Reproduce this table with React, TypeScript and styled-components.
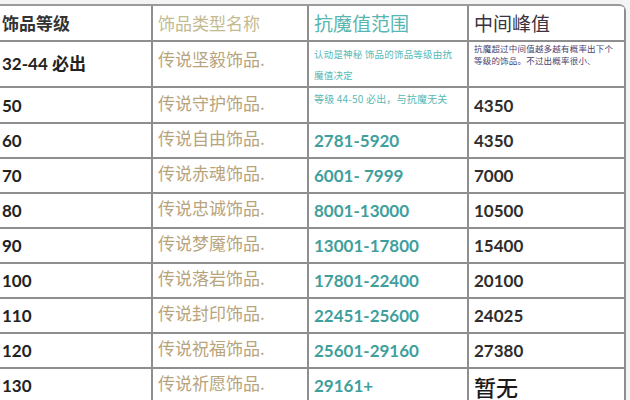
import { Fragment } from "react";
import styled, { createGlobalStyle } from "styled-components";

const GlobalStyle = createGlobalStyle`
  html, body {
    margin: 0;
    padding: 0;
    background: #f4f4f4;
  }
  body {
    width: 630px;
    height: 400px;
    overflow: hidden;
    font-family: "Noto Sans CJK SC", "Noto Sans", sans-serif;
  }
`;

type Tone = "level" | "name" | "range" | "peak";

const CJK = `"Noto Sans CJK SC", sans-serif`;
const NUM = `Lato, "Noto Sans CJK SC", sans-serif`;

const Page = styled.div`
  padding-top: 4px;
  height: 400px;
  box-sizing: border-box;
  overflow: hidden;
`;

const Table = styled.div`
  display: grid;
  grid-template-columns: 159px 156px 160px 157px;
  grid-template-rows: 36px 46px 36px repeat(8, 35px);
  margin-left: -8px;
  width: max-content;
  background: #fff;
  border-top: 2px solid #9a9a9a;
  border-left: 2px solid #9a9a9a;
  border-top-right-radius: 7px;
  overflow: hidden;
`;

const colours: Record<Tone, string> = {
  level: "#222",
  name: "#b8a47c",
  range: "#3f9f9c",
  peak: "#2e2e2e",
};

const Cell = styled.div<{ $tone: Tone; $top?: boolean }>`
  box-sizing: border-box;
  border-right: 2px solid #8e8e8e;
  border-bottom: 2px solid #8e8e8e;
  display: flex;
  flex-direction: column;
  justify-content: ${(p) => (p.$top ? "flex-start" : "center")};
  padding: ${(p) =>
    p.$tone === "level" ? "0 0 0 8px" : p.$tone === "name" ? "0 0 6px 5px" : "0 0 0 5px"};
  color: ${(p) => colours[p.$tone]};
  font-family: ${(p) => (p.$tone === "name" ? CJK : NUM)};
  font-size: 17px;
  font-weight: ${(p) => (p.$tone === "name" ? 400 : 700)};
  white-space: nowrap;
`;

const HeadCell = styled(Cell)`
  font-family: ${CJK};
  font-weight: ${(p) => (p.$tone === "level" ? 700 : 400)};
  font-size: ${(p) => (p.$tone === "level" ? "17px" : p.$tone === "name" ? "17px" : "19px")};
  color: ${(p) =>
    p.$tone === "level"
      ? "#333"
      : p.$tone === "name"
      ? "#c4ba90"
      : p.$tone === "range"
      ? "#57b6b2"
      : "#3a3440"};
  padding-bottom: 2px;
`;

const LevelText = styled.span`
  margin-top: 8px;
`;

const Note = styled.div<{ $lh: number; $size: number; $color: string }>`
  font-family: ${CJK};
  font-weight: 400;
  font-size: ${(p) => p.$size}px;
  line-height: ${(p) => p.$lh}px;
  color: ${(p) => p.$color};
  letter-spacing: 0.2px;
`;

const NameTop = styled.span`
  margin-top: 4px;
`;

const None = styled.span`
  font-family: ${CJK};
  font-weight: 500;
  font-size: 22px;
  color: #1a1a1a;
`;

const rows: [string, string, string, string][] = [
  ["60", "传说自由饰品.", "2781-5920", "4350"],
  ["70", "传说赤魂饰品.", "6001- 7999", "7000"],
  ["80", "传说忠诚饰品.", "8001-13000", "10500"],
  ["90", "传说梦魇饰品.", "13001-17800", "15400"],
  ["100", "传说落岩饰品.", "17801-22400", "20100"],
  ["110", "传说封印饰品.", "22451-25600", "24025"],
  ["120", "传说祝福饰品.", "25601-29160", "27380"],
];

export default function App() {
  return (
    <Page>
      <GlobalStyle />
      <Table>
        <HeadCell $tone="level">饰品等级</HeadCell>
        <HeadCell $tone="name">饰品类型名称</HeadCell>
        <HeadCell $tone="range">抗魔值范围</HeadCell>
        <HeadCell $tone="peak">中间峰值</HeadCell>

        <Cell $tone="level" $top>
          <LevelText>
            32-44 <span style={{ fontFamily: CJK }}>必出</span>
          </LevelText>
        </Cell>
        <Cell $tone="name" $top>
          <NameTop>传说坚毅饰品.</NameTop>
        </Cell>
        <Cell $tone="range" $top>
          <Note $lh={21} $size={9.5} $color="#58b9b6" style={{ marginTop: 2 }}>
            认动是神秘 饰品的饰品等级由抗
            <br />
            魔值决定
          </Note>
        </Cell>
        <Cell $tone="peak" $top>
          <Note $lh={12} $size={8.5} $color="#4b3f6e">
            抗魔超过中间值越多越有概率出下个
            <br />
            等级的饰品。不过出概率很小、
          </Note>
        </Cell>

        <Cell $tone="level">50</Cell>
        <Cell $tone="name">传说守护饰品.</Cell>
        <Cell $tone="range" $top>
          <Note $lh={20} $size={10} $color="#58b9b6" style={{ marginTop: 1 }}>
            等级 44-50 必出，与抗魔无关
          </Note>
        </Cell>
        <Cell $tone="peak">4350</Cell>

        {rows.map(([lvl, name, range, peak]) => (
          <Fragment key={lvl}>
            <Cell $tone="level">{lvl}</Cell>
            <Cell $tone="name">{name}</Cell>
            <Cell $tone="range">{range}</Cell>
            <Cell $tone="peak">{peak}</Cell>
          </Fragment>
        ))}

        <Cell $tone="level">130</Cell>
        <Cell $tone="name">传说祈愿饰品.</Cell>
        <Cell $tone="range">29161+</Cell>
        <Cell $tone="peak">
          <None>暂无</None>
        </Cell>
      </Table>
    </Page>
  );
}
